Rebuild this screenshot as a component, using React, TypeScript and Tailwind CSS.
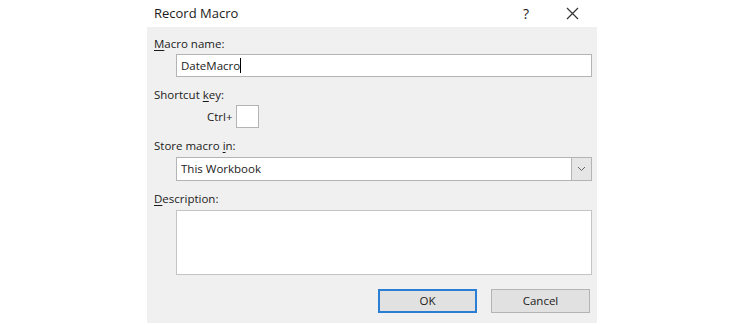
import React from 'react';

const Mn = ({ children }: { children: React.ReactNode }) => <span className="underline underline-offset-2">{children}</span>;

const App = () => {
  return (
    <div className="w-[750px] h-[325px] bg-white font-['Open_Sans',sans-serif] text-[#1b1b1b] overflow-hidden">
      <div className="ml-[147px] w-[450px]">
        <div className="h-[27px] flex items-center pl-[7px]">
          <span className="text-[13px] leading-none">Record Macro</span>
          <span className="ml-auto text-[14px] leading-none mr-[37px]">?</span>
          <svg width="13" height="13" viewBox="0 0 13 13" className="mr-[18px]">
            <path d="M1 1 L12 12 M12 1 L1 12" stroke="#333" strokeWidth="1.2" />
          </svg>
        </div>
        <div className="bg-[#f0f0f0] h-[296px] pl-[7px] pr-[5px] pt-[9px] text-[11.5px]">
          <div className="h-4 leading-4"><Mn>M</Mn>acro name:</div>
          <div className="mt-[2px] ml-[22px] h-[23px] bg-white border border-[#b4b4b4] flex items-center pl-[4px]">
            <span>DateMacro</span>
            <span className="w-px h-[15px] bg-black"></span>
          </div>
          <div className="mt-[10px] h-4 leading-4">Shortcut <Mn>k</Mn>ey:</div>
          <div className="mt-[2px] flex items-center h-[23px]">
            <span className="ml-[53px] w-[29px]">Ctrl+</span>
            <div className="w-[23px] h-[23px] bg-white border border-[#b4b4b4]"></div>
          </div>
          <div className="mt-[10px] h-4 leading-4">Store macro <Mn>i</Mn>n:</div>
          <div className="mt-[3px] ml-[22px] h-[24px] bg-white border border-[#b4b4b4] flex items-center pl-[4px]">
            <span>This Workbook</span>
            <div className="ml-auto h-full w-[20px] bg-[#e6e6e6] border-l border-[#b4b4b4] flex items-center justify-center">
              <svg width="9" height="6" viewBox="0 0 9 6">
                <path d="M1 1 L4.5 4.5 L8 1" stroke="#666" strokeWidth="1" fill="none" />
              </svg>
            </div>
          </div>
          <div className="mt-[10px] h-4 leading-4"><Mn>D</Mn>escription:</div>
          <div className="mt-[3px] ml-[22px] h-[65px] bg-white border border-[#c4c4c4]"></div>
          <div className="mt-[14px] flex justify-end gap-[14px] pr-[2px]">
            <button className="w-[99px] h-[24px] bg-[#e1e1e1] border-2 border-[#2a7fd4]">OK</button>
            <button className="w-[99px] h-[24px] bg-[#e1e1e1] border border-[#b4b4b4]">Cancel</button>
          </div>
        </div>
      </div>
    </div>
  );
};

export default App;
